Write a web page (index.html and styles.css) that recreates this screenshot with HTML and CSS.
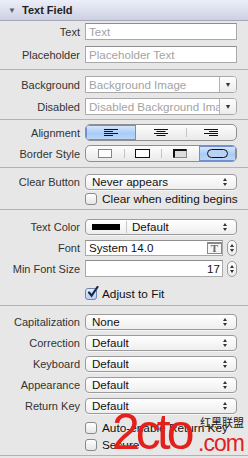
FILE: index.html
```html
<!DOCTYPE html>
<html lang="en">
<head>
    <meta charset="UTF-8">
    <title>Text Field Inspector</title>
    <link rel="stylesheet" href="styles.css">
</head>
<body>
<div class="panel">
    <div class="header"><span class="twisty">&#9660;</span>Text Field</div>

    <section class="group g1">
        <div class="row"><span class="lbl">Text</span><div class="field"><span class="ph">Text</span></div></div>
        <div class="row"><span class="lbl">Placeholder</span><div class="field"><span class="ph">Placeholder Text</span></div></div>
    </section>

    <section class="group g2">
        <div class="row"><span class="lbl">Background</span>
            <div class="combo"><span class="combo-text ph">Background Image</span><span class="combo-btn">&#9660;</span></div></div>
        <div class="row"><span class="lbl">Disabled</span>
            <div class="combo"><span class="combo-text ph">Disabled Background Image</span><span class="combo-btn">&#9660;</span></div></div>
    </section>

    <section class="group g3">
        <div class="row"><span class="lbl">Alignment</span>
            <div class="seg">
                <span class="seg-item on">
                    <svg width="14" height="7" viewBox="0 0 14 7"><path d="M0 .5h14M0 2.5h9M0 4.5h14M0 6.5h9" stroke="#111" stroke-width="1"/></svg>
                </span>
                <span class="seg-item">
                    <svg width="14" height="7" viewBox="0 0 14 7"><path d="M0 .5h14M2.5 2.5h9M0 4.5h14M2.5 6.5h9" stroke="#111" stroke-width="1"/></svg>
                </span>
                <span class="seg-item">
                    <svg width="14" height="7" viewBox="0 0 14 7"><path d="M0 .5h14M5 2.5h9M0 4.5h14M5 6.5h9" stroke="#111" stroke-width="1"/></svg>
                </span>
            </div></div>
        <div class="row"><span class="lbl">Border Style</span>
            <div class="seg">
                <span class="seg-item">
                    <svg width="14" height="9" viewBox="0 0 14 9"><rect x=".5" y=".5" width="13" height="8" fill="#fff" stroke="#111" stroke-dasharray="1 1"/></svg>
                </span>
                <span class="seg-item">
                    <svg width="15" height="9" viewBox="0 0 15 9"><rect x=".5" y=".5" width="14" height="8" fill="#fff" stroke="#111"/></svg>
                </span>
                <span class="seg-item">
                    <svg width="14" height="9" viewBox="0 0 14 9"><rect x=".5" y=".5" width="13" height="8" fill="#ddd" stroke="#888"/><path d="M1 8.5V1h12.5" fill="none" stroke="#111" stroke-width="2"/></svg>
                </span>
                <span class="seg-item on">
                    <svg width="21" height="9" viewBox="0 0 21 9"><rect x=".5" y=".5" width="20" height="8" rx="4" fill="#b9d2f2" stroke="#111"/></svg>
                </span>
            </div></div>
    </section>

    <section class="group g4">
        <div class="row"><span class="lbl">Clear Button</span>
            <div class="popup">Never appears<span class="arrows"></span></div></div>
        <div class="row check-row"><span></span>
            <label class="check"><span class="box"></span>Clear when editing begins</label></div>
    </section>

    <section class="group g5">
        <div class="row"><span class="lbl">Text Color</span>
            <div class="popup color-popup"><span class="swatch"></span><span class="divider"></span>Default<span class="arrows"></span></div></div>
        <div class="row"><span class="lbl">Font</span>
            <div class="with-stepper">
                <div class="field font-field">System 14.0<span class="font-btn">T</span></div>
                <span class="stepper"></span>
            </div></div>
        <div class="row size-row"><span class="lbl">Min Font Size</span>
            <div class="with-stepper">
                <div class="field num-field">17</div>
                <span class="stepper"></span>
            </div></div>
        <div class="row check-row fit-row"><span></span>
            <label class="check"><span class="box checked">
                <svg width="13" height="13" viewBox="0 0 13 13"><path d="M3 6.5l2.6 3.2L11.5 1" fill="none" stroke="#142a52" stroke-width="2.2" stroke-linecap="round"/></svg>
            </span>Adjust to Fit</label></div>
    </section>

    <section class="group g6">
        <div class="row"><span class="lbl">Capitalization</span><div class="popup">None<span class="arrows"></span></div></div>
        <div class="row"><span class="lbl">Correction</span><div class="popup">Default<span class="arrows"></span></div></div>
        <div class="row"><span class="lbl">Keyboard</span><div class="popup">Default<span class="arrows"></span></div></div>
        <div class="row"><span class="lbl">Appearance</span><div class="popup">Default<span class="arrows"></span></div></div>
        <div class="row"><span class="lbl">Return Key</span><div class="popup">Default<span class="arrows"></span></div></div>
        <div class="row check-row auto-row"><span></span>
            <label class="check"><span class="box"></span>Auto-enable Return Key</label></div>
        <div class="row check-row"><span></span>
            <label class="check"><span class="box"></span>Secure</label></div>
    </section>

    <div class="watermark">
        <span class="wm-cn">红黑联盟</span>
        <span class="wm-big">2cto</span>
        <span class="wm-com">.com</span>
    </div>
</div>
</body>
</html>
```

FILE: styles.css
```css
body { margin: 0; background: #e7e7e7; font-family: "Liberation Sans", Arial, sans-serif; }
.panel {
    position: relative;
    width: 248px;
    height: 458px;
    overflow: hidden;
    background: #e7e7e7;
}

/* header */
.header {
    height: 20px;
    border-bottom: 1px solid #a4a7b8;
    background: linear-gradient(#eceef9, #cdd0e2);
    display: flex;
    align-items: center;
    font-weight: bold;
    font-size: 11px;
    color: #222;
}
.twisty { font-size: 8px; color: #606060; width: 22px; padding-left: 8px; box-sizing: border-box; }

/* groups */
.group {
    display: flex;
    flex-direction: column;
    border-bottom: 1px solid #b2b2b2;
}
.g1 { padding: 2px 0 6px; gap: 6px; }
.g2 { padding: 6px 0 4px; gap: 5px; }
.g3 { padding: 4px 0 5px; gap: 4px; }
.g4 { padding: 6px 0 4px; gap: 3px; }
.g5 { padding: 9px 0 5px; gap: 5px; }
.g6 { padding: 8px 0 4px; gap: 5px; }
.size-row { margin-top: -1px; }
.fit-row { margin-top: 6px; }
.auto-row { margin-top: 3px; }

.row {
    display: grid;
    grid-template-columns: 80px 152px;
    column-gap: 5px;
    align-items: center;
    line-height: 12px;
}
.lbl { text-align: right; font-size: 11px; color: #333; white-space: nowrap; }

/* text fields */
.field {
    box-sizing: border-box;
    height: 17px;
    border: 1px solid #a9a9a9;
    border-top-color: #8e8e8e;
    background: #fff;
    font-size: 11.6px;
    line-height: 15px;
    padding: 0 3px;
    color: #111;
    white-space: nowrap;
    overflow: hidden;
}
.ph { color: #a3a3a3; }

/* combo box */
.combo {
    position: relative;
    height: 17px;
    box-sizing: border-box;
    border: 1px solid #a9a9a9;
    border-radius: 0 4px 4px 0;
    background: #fff;
    font-size: 11.6px;
    line-height: 15px;
}
.combo-text {
    display: block;
    margin-right: 16px;
    padding-left: 3px;
    white-space: nowrap;
    overflow: hidden;
}
.combo-btn {
    position: absolute;
    right: 0;
    top: 0;
    bottom: 0;
    width: 16px;
    border-left: 1px solid #b4b4b4;
    border-radius: 0 3px 3px 0;
    background: linear-gradient(#fdfdfd, #ececec);
    font-size: 7px;
    color: #333;
    text-align: center;
    line-height: 15px;
}

/* segmented control */
.seg {
    display: flex;
    height: 17px;
    box-sizing: border-box;
    border: 1px solid #8f8f8f;
    border-radius: 5px;
    background: linear-gradient(#fdfdfd, #e9e9e9);
    overflow: hidden;
}
.seg-item {
    flex: 1;
    display: flex;
    align-items: center;
    justify-content: center;
    position: relative;
}
.seg-item + .seg-item::before {
    content: "";
    position: absolute;
    left: 0;
    top: 3px;
    bottom: 3px;
    border-left: 1px solid #c4c4c4;
}
.seg-item.on {
    background: linear-gradient(#dbe9fc, #a9ccf6 55%, #bcd8fa);
    box-shadow: inset 0 0 0 1px #6f8fd0;
}
.seg-item.on::before, .seg-item.on + .seg-item::before { display: none; }

/* popup buttons */
.popup {
    position: relative;
    height: 16px;
    box-sizing: border-box;
    border: 1px solid #9b9b9b;
    border-radius: 4px;
    background: linear-gradient(#ffffff, #eeeeee);
    box-shadow: 0 1px 0 rgba(255,255,255,0.6);
    font-size: 11.6px;
    line-height: 14px;
    padding-left: 6px;
    color: #111;
    white-space: nowrap;
}
.arrows {
    position: absolute;
    right: 8px;
    top: 3px;
    width: 5px;
    height: 8px;
}
.arrows::before, .arrows::after {
    content: "";
    position: absolute;
    left: 0;
    border-left: 2.5px solid transparent;
    border-right: 2.5px solid transparent;
}
.arrows::before { top: 0; border-bottom: 3px solid #333; }
.arrows::after { bottom: 0; border-top: 3px solid #333; }

.color-popup { display: flex; align-items: center; }
.swatch { width: 28px; height: 6px; background: #000; }
.divider { width: 1px; height: 12px; background: #c8c8c8; margin: 0 5px 0 6px; }

/* font / size fields */
.with-stepper { display: flex; align-items: center; gap: 4px; }
.font-field { position: relative; flex: 1; height: 16px; line-height: 14px; }
.num-field { flex: 1; text-align: right; padding-right: 2px; }
.font-btn {
    position: absolute;
    right: 0;
    top: 1px;
    width: 15px;
    height: 12px;
    box-sizing: border-box;
    border: 1px solid #888;
    border-top-width: 2px;
    background: #f6f6f6;
    font-family: "Liberation Serif", serif;
    font-weight: bold;
    font-size: 11px;
    line-height: 9px;
    text-align: center;
    color: #666;
}
.stepper {
    position: relative;
    width: 10px;
    height: 16px;
    box-sizing: border-box;
    border: 1px solid #9b9b9b;
    border-radius: 5px;
    background: linear-gradient(#fff, #eaeaea);
}
.stepper::before, .stepper::after {
    content: "";
    position: absolute;
    left: 2px;
    border-left: 2px solid transparent;
    border-right: 2px solid transparent;
}
.stepper::before { top: 3px; border-bottom: 3px solid #333; }
.stepper::after { bottom: 3px; border-top: 3px solid #333; }

/* checkboxes */
.check-row { height: 12px; }
.check {
    display: flex;
    align-items: center;
    gap: 5px;
    height: 12px;
    font-size: 11.8px;
    line-height: 12px;
    color: #111;
    white-space: nowrap;
}
.box {
    position: relative;
    flex: none;
    width: 12px;
    height: 12px;
    box-sizing: border-box;
    border: 1px solid #8a8a8a;
    border-radius: 3px;
    background: linear-gradient(#fff, #e6e6e6);
}
.box.checked { background: linear-gradient(#e6effb, #b7cff0); border-color: #6f86aa; }
.box svg { position: absolute; left: 0; top: -3px; }

/* watermark overlay */
.watermark { position: absolute; left: 112px; top: 410px; width: 136px; height: 48px; }
.wm-big {
    position: absolute;
    left: 0;
    top: 0;
    font-size: 50px;
    letter-spacing: -4px;
    line-height: 44px;
    color: #e3201b;
}
.wm-com {
    position: absolute;
    left: 86px;
    top: 22px;
    font-size: 23px;
    letter-spacing: -1px;
    line-height: 23px;
    color: #e3201b;
}
.wm-cn {
    position: absolute;
    left: 88px;
    top: 5px;
    font-family: "Noto Sans CJK SC", sans-serif;
    font-size: 11px;
    line-height: 14px;
    color: #222;
}
```
